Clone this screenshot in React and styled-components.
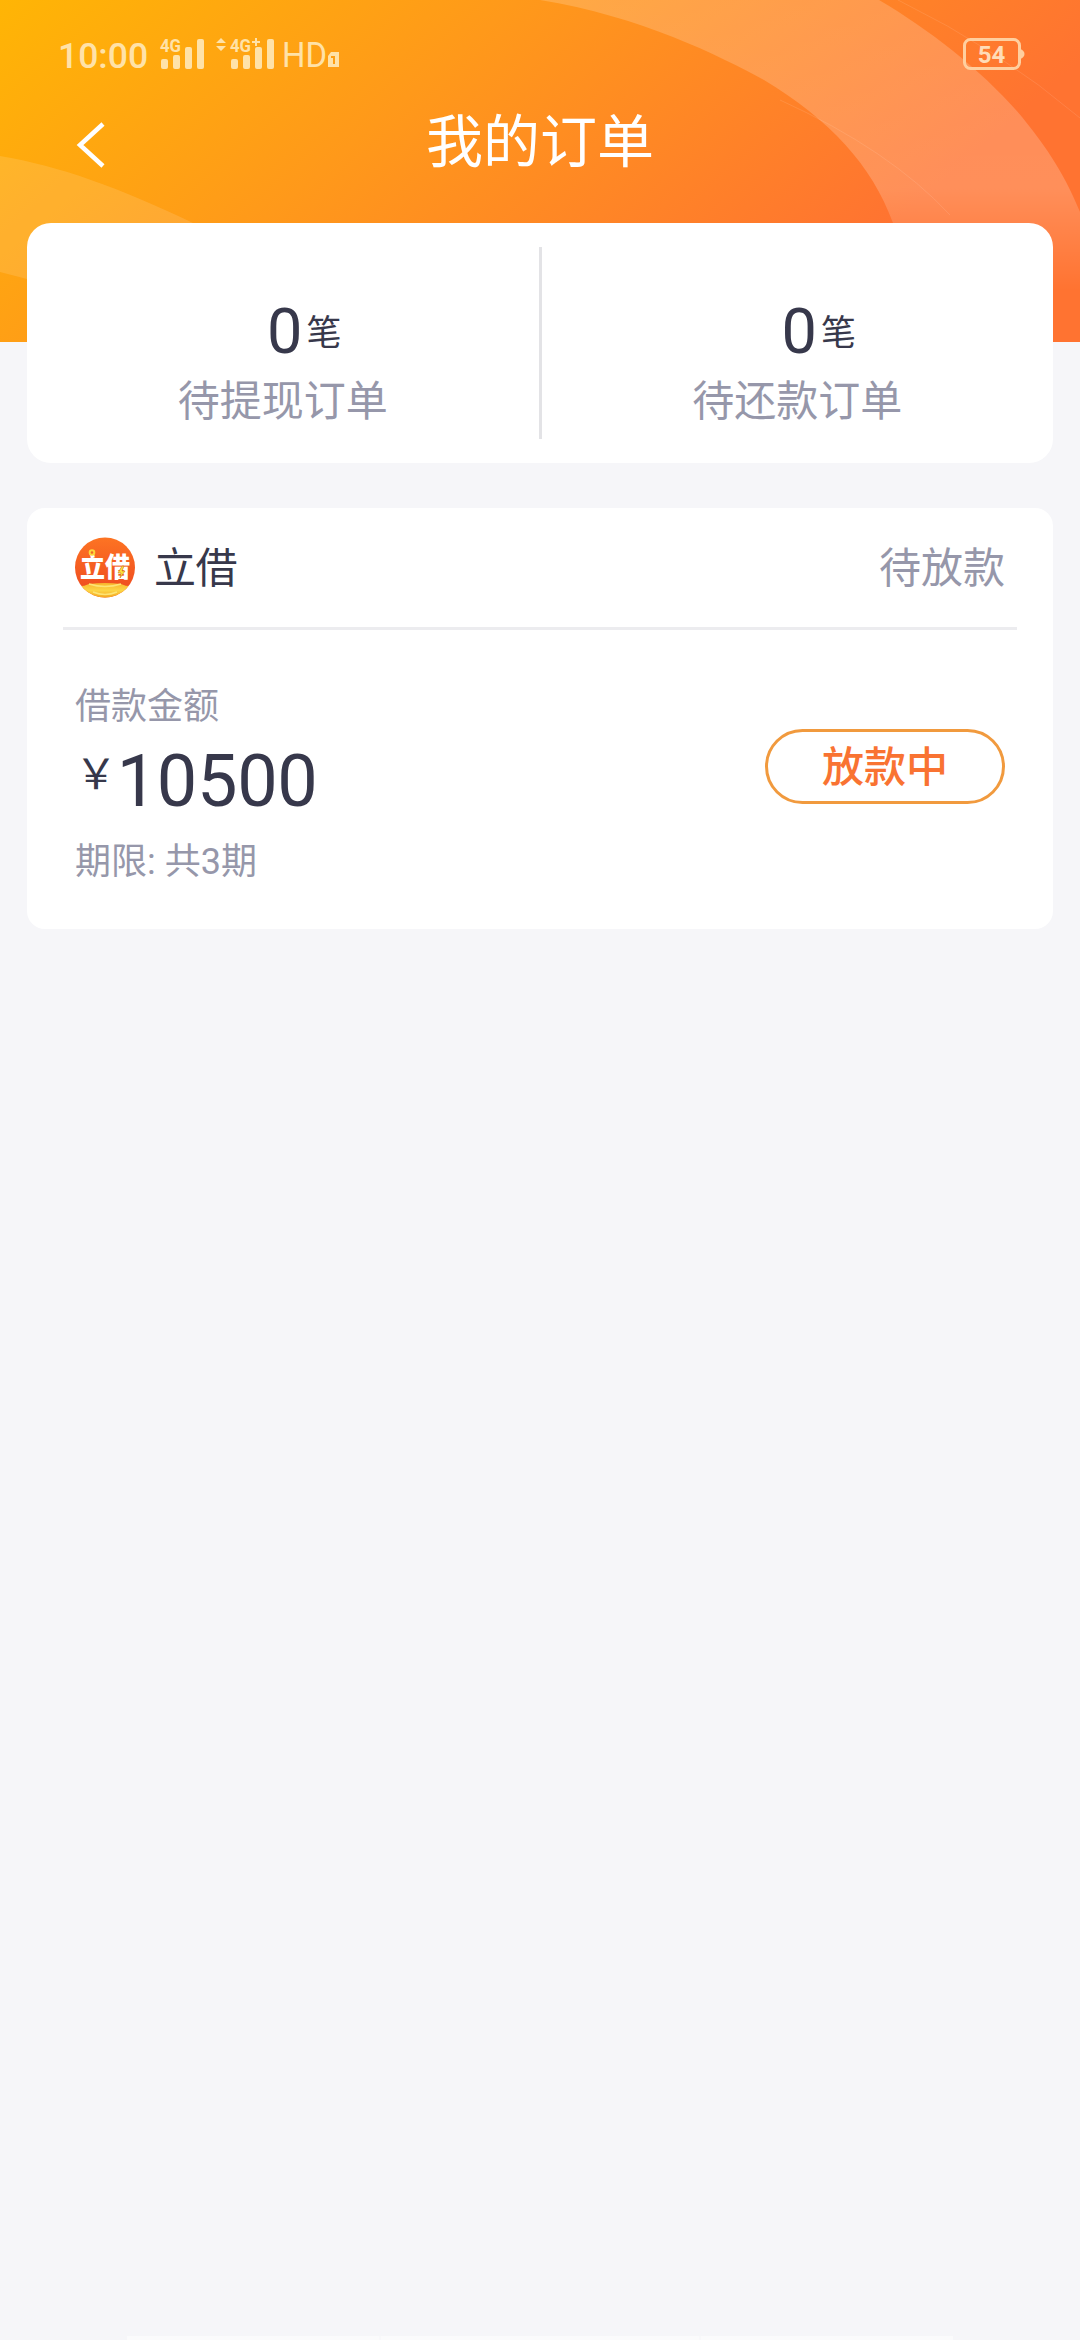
import React from "react";
import styled, { createGlobalStyle } from "styled-components";

const GlobalStyle = createGlobalStyle`
  * {
    box-sizing: border-box;
  }
  body {
    margin: 0;
    background: #f6f6f9;
    font-family: Roboto, "Noto Sans CJK SC", sans-serif;
  }
  svg {
    overflow: visible;
  }
`;

const Page = styled.div`
  display: grid;
  grid-template-columns: 100%;
  grid-template-rows: 223px auto 1fr;
  height: 2340px;
  overflow: hidden;
  color: #37384b;
`;

const Header = styled.header`
  grid-area: 1 / 1;
  height: 342px;
  position: relative;
`;

const HeaderArt = styled.svg`
  position: absolute;
  inset: 0;
  overflow: hidden;
`;

const StatusBar = styled.div`
  position: relative;
  display: flex;
  justify-content: space-between;
  height: 100px;
  padding: 37px 55px 0 58px;
`;

const StatusGroup = styled.div`
  display: flex;
  align-items: flex-start;
  color: #ffe2a8;
`;

const Clock = styled.span`
  width: 102px;
  font-size: 35.5px;
  font-weight: 500;
  line-height: 38px;
`;

const NavBar = styled.div`
  position: relative;
  display: grid;
  grid-template-columns: 180px 1fr 180px;
  align-items: center;
  height: 86px;
  color: #fff;
`;

const BackButton = styled.button`
  display: flex;
  padding: 4px 0 0 76px;
  border: 0;
  background: none;
  color: inherit;
`;

const Title = styled.h1`
  margin: 0;
  font-size: 57px;
  font-weight: 400;
  line-height: 86px;
  text-align: center;
`;

const Content = styled.main`
  grid-area: 2 / 1;
  position: relative;
  display: flex;
  flex-direction: column;
  gap: 45px;
  padding: 0 27px;
`;

const Summary = styled.section`
  display: flex;
  height: 240px;
  padding: 24px 0;
  border-radius: 24px;
  background: #fff;
`;

const SummaryItem = styled.div`
  flex: 1;
  display: flex;
  flex-direction: column;
  align-items: center;
  padding-top: 48px;
  & + & {
    border-left: 3px solid #e3e3e6;
  }
`;

const Count = styled.div`
  display: flex;
  height: 76px;
  padding-left: 43px;
  font-size: 63px;
  line-height: 74px;
  small {
    margin-left: 4px;
    font-size: 35px;
    line-height: 78px;
  }
`;

const Label = styled.span`
  font-size: 42px;
  line-height: 62px;
  color: #9697aa;
`;

const OrderCard = styled.section`
  height: 421px;
  padding: 0 36px;
  border-radius: 18px;
  background: #fff;
`;

const OrderHead = styled.div`
  display: flex;
  align-items: center;
  height: 122px;
  padding: 0 12px;
  border-bottom: 3px solid #ececef;
  span {
    padding-top: 2px;
  }
`;

const OrderName = styled.span`
  flex: 1;
  margin-left: 19px;
  font-size: 42px;
  line-height: 62px;
  letter-spacing: -0.5px;
`;

const OrderBody = styled.div`
  display: flex;
  justify-content: space-between;
  padding: 50px 12px 0;
`;

const Note = styled.div`
  font-size: 36px;
  line-height: 54px;
  color: #9697aa;
`;

const Amount = styled.div`
  display: flex;
  height: 101px;
  font-size: 72px;
  line-height: 96px;
  letter-spacing: -0.3px;
  small {
    font-size: 42px;
    line-height: 82px;
  }
`;

const StatusButton = styled.button`
  width: 240px;
  height: 75px;
  margin-top: 49px;
  padding: 2px 0 0;
  border: 3px solid #f19a3e;
  border-radius: 38px;
  background: none;
  font: 500 42px/66px Roboto, "Noto Sans CJK SC", sans-serif;
  color: #f97332;
`;

const NextPanel = styled.div`
  grid-area: 3 / 1;
  align-self: end;
  display: grid;
  grid-template-columns: 252px 1fr 252px;
  gap: 2px;
  height: 4px;
  margin: 0 127px;
  background: #f8f8fa;
  span {
    background: #fbfbfc;
  }
`;

const SignalIcons = () => (
  <svg width="186" height="38" viewBox="0 0 186 38" fill="currentColor">
    <text x="0" y="14.5" fontSize="18" fontWeight="700" textLength="21" lengthAdjust="spacingAndGlyphs">4G</text>
    <rect x="1" y="22" width="7" height="10" rx="2" />
    <rect x="13" y="18" width="7" height="14" rx="2" />
    <rect x="25" y="10" width="7" height="22" rx="2" />
    <rect x="37" y="2" width="7" height="30" rx="2" />
    <path d="M56 6l5-5 5 5zM56 9h10l-5 5z" />
    <text x="70" y="14.5" fontSize="18" fontWeight="700" textLength="21" lengthAdjust="spacingAndGlyphs">4G</text>
    <path d="M92 4h3V1h2v3h3v2h-3v3h-2V6h-3z" />
    <rect x="71" y="22" width="7" height="10" rx="2" />
    <rect x="83" y="18" width="7" height="14" rx="2" />
    <rect x="95" y="10" width="7" height="22" rx="2" />
    <rect x="107" y="2" width="7" height="30" rx="2" />
    <text x="122" y="30" fontSize="35" textLength="45" lengthAdjust="spacingAndGlyphs">HD</text>
    <path fillRule="evenodd" d="M171 15h8v15h-11V19zM171 19v2h2v6h2v-8z" />
  </svg>
);

const Battery = () => (
  <svg width="62" height="34" viewBox="0 0 62 34">
    <rect x="1.5" y="2.5" width="55" height="29" rx="6" fill="none" stroke="#ffcf9f" strokeWidth="3" />
    <path d="M57.5 12q4 2 4 5t-4 5z" fill="#ffcf9f" />
    <text x="28.5" y="25.5" fontSize="24" fontWeight="700" textAnchor="middle" fill="#ffdcb8">54</text>
  </svg>
);

const LenderLogo = () => (
  <svg width="60" height="61" viewBox="0 0 60 61">
    <defs>
      <clipPath id="logoClip">
        <circle cx="30" cy="30.5" r="30" />
      </clipPath>
      <linearGradient id="logoRed" x2="0" y2="1">
        <stop offset="0" stopColor="#fd7423" />
        <stop offset="0.8" stopColor="#f04f20" />
      </linearGradient>
      <linearGradient id="logoGold" x2="0" y2="1">
        <stop offset="0" stopColor="#f8b62d" />
        <stop offset="0.5" stopColor="#fcd545" />
        <stop offset="1" stopColor="#f4a41c" />
      </linearGradient>
    </defs>
    <g clipPath="url(#logoClip)">
      <rect width="60" height="61" fill="url(#logoRed)" />
      <path d="M0 49q8 1 14-2q16-2 32 0q6 3 14 2v12H0z" fill="url(#logoGold)" />
      <path d="M14 47q16 5 32 0M18 55q12 5 24 0" fill="none" stroke="#fde474" strokeWidth="1.5" />
    </g>
    <text x="5" y="39.5" fontSize="27" fontWeight="900" fill="#fff" textLength="50" lengthAdjust="spacingAndGlyphs">立借</text>
    <circle cx="17" cy="15.5" r="2.3" fill="#f0652a" stroke="#fcd53a" strokeWidth="2" />
    <path d="M47 29l-4 7h3l-1 5 5-7h-3l2-5z" fill="#fde03a" stroke="#c8761c" strokeWidth="0.6" />
  </svg>
);

const summary = [
  { label: "待提现订单", count: 0 },
  { label: "待还款订单", count: 0 },
];

const App = () => {
  return (
    <Page>
      <GlobalStyle />
      <Header>
        <HeaderArt width="1080" height="342" viewBox="0 0 1080 342">
          <defs>
            <linearGradient id="sky" gradientUnits="userSpaceOnUse" x1="0" y1="0" x2="490" y2="570">
              <stop offset="0" stopColor="#ffb505" />
              <stop offset="0.45" stopColor="#ff991a" />
              <stop offset="1" stopColor="#ff7331" />
            </linearGradient>
            <linearGradient id="band" x1="0" y1="0" x2="0" y2="1">
              <stop offset="0" stopColor="#fff" stopOpacity="0.18" />
              <stop offset="0.55" stopColor="#fff" stopOpacity="0.2" />
              <stop offset="0.85" stopColor="#fff" stopOpacity="0" />
            </linearGradient>
          </defs>
          <rect width="1080" height="342" fill="url(#sky)" />
          <path d="M540 0C640 16 720 56 764 80C830 120 872 165 893 223L910 342H1080V212C1062 168 1042 142 1022 117C984 72 930 30 879 0z" fill="url(#band)" />
          <path d="M0 156C60 166 120 188 193 223L110 310Q60 286 0 272z" fill="#fff" fillOpacity="0.12" />
          <path d="M898 0Q1000 50 1080 118M780 100Q890 150 950 215" fill="none" stroke="#fff" strokeOpacity="0.1" />
        </HeaderArt>
        <StatusBar>
          <StatusGroup>
            <Clock>10:00</Clock>
            <SignalIcons />
          </StatusGroup>
          <StatusGroup>
            <Battery />
          </StatusGroup>
        </StatusBar>
        <NavBar>
          <BackButton aria-label="返回">
            <svg width="30" height="46" viewBox="0 0 30 46" fill="none" stroke="currentColor" strokeWidth="4.5">
              <path d="M27 2L4 23L27 44" />
            </svg>
          </BackButton>
          <Title>我的订单</Title>
        </NavBar>
      </Header>
      <Content>
        <Summary>
          {summary.map(({ label, count }) => (
            <SummaryItem key={label}>
              <Count>
                {count}
                <small>笔</small>
              </Count>
              <Label>{label}</Label>
            </SummaryItem>
          ))}
        </Summary>
        <OrderCard>
          <OrderHead>
            <LenderLogo />
            <OrderName>立借</OrderName>
            <Label>待放款</Label>
          </OrderHead>
          <OrderBody>
            <div>
              <Note>借款金额</Note>
              <Amount>
                <small>￥</small>
                10500
              </Amount>
              <Note>期限: 共3期</Note>
            </div>
            <StatusButton>放款中</StatusButton>
          </OrderBody>
        </OrderCard>
      </Content>
      <NextPanel>
        <span />
        <span />
        <span />
      </NextPanel>
    </Page>
  );
};

export default App;
